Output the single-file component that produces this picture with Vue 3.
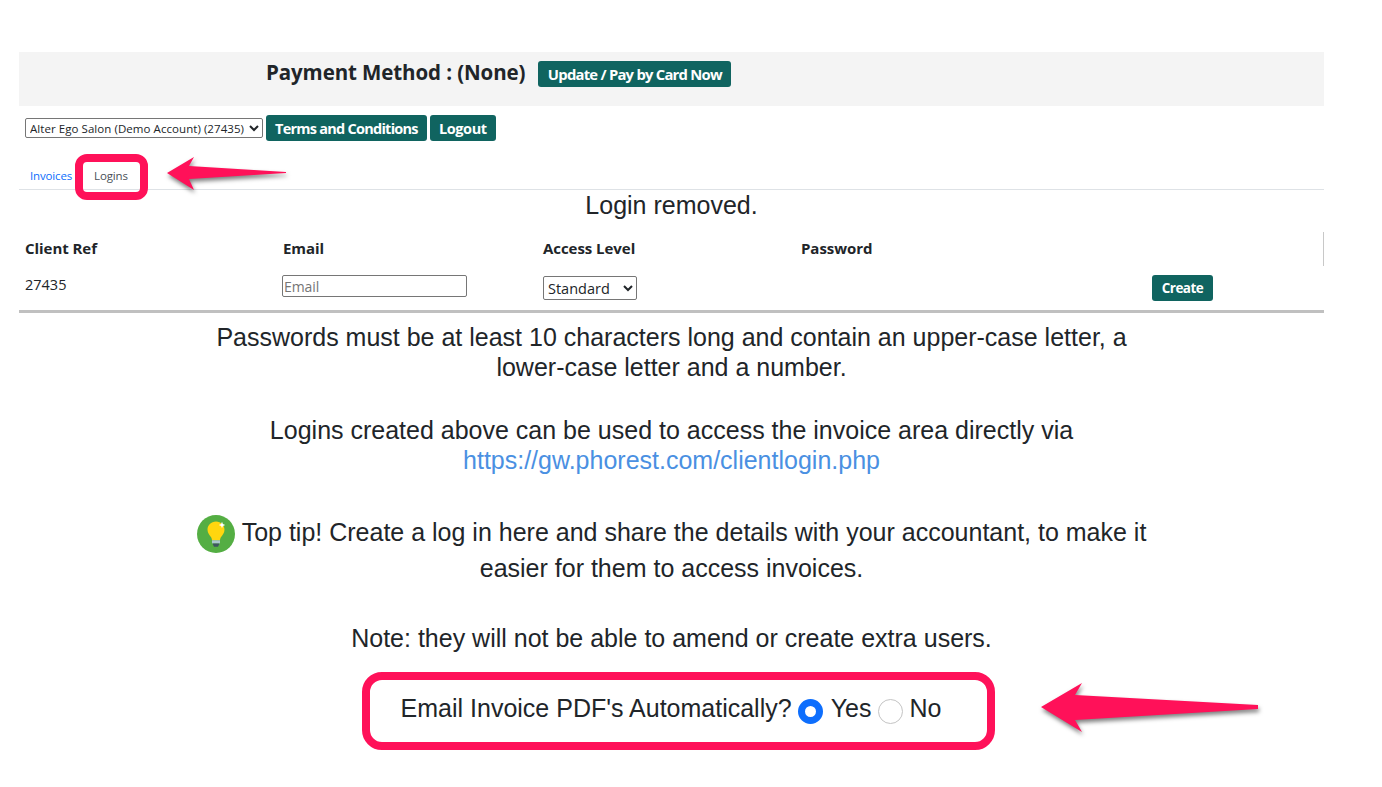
<script setup>
const headers = ['Client Ref', 'Email', 'Access Level', 'Password']
</script>

<template>
  <div class="page">
    <div class="paybar">
      <strong class="paytext">Payment Method : (None)</strong>
      <button class="btn btn-lg btn-pay" type="button">Update / Pay by Card Now</button>
    </div>

    <div class="account">
      <select class="account-select">
        <option>Alter Ego Salon (Demo Account) (27435)</option>
      </select>
      <button class="btn btn-lg" type="button">Terms and Conditions</button>
      <button class="btn btn-lg btn-logout" type="button">Logout</button>
    </div>

    <nav class="tabs">
      <a class="tab tab-link">Invoices</a>
      <a class="tab tab-active">Logins</a>
    </nav>

    <div class="removed">Login removed.</div>

    <div class="grid">
      <div v-for="h in headers" :key="h" class="th">{{ h }}</div>
      <div class="th th-end"></div>
      <div class="td ref">27435</div>
      <div class="td"><input class="email" type="text" placeholder="Email" /></div>
      <div class="td"><select class="level"><option>Standard</option></select></div>
      <div class="td"></div>
      <div class="td"><button class="btn btn-create" type="button">Create</button></div>
    </div>

    <div class="copy">
      <p class="para first">Passwords must be at least 10 characters long and contain an upper-case letter, a<br />lower-case letter and a number.</p>
      <p class="para second">Logins created above can be used to access the invoice area directly via<br /><a class="link">https://gw.phorest.com/clientlogin.php</a></p>
      <div class="tip">
        <svg class="bulb" viewBox="0 0 38 38" width="38" height="38" aria-hidden="true">
          <circle cx="19" cy="19" r="19" fill="#54ae43" />
          <path d="M19 6.500c-5 0-8.500 3.700-8.500 8.200 0 3.400 2 5.100 3.400 7.300.8 1.200 1 2.200 1.100 3.300h8c.1-1.100.3-2.100 1.100-3.300 1.400-2.200 3.400-3.900 3.400-7.300 0-4.500-3.500-8.200-8.500-8.200z" fill="#ffd60f" />
          <rect x="15" y="25.300" width="8" height="3.200" fill="#a9c7cc" />
          <path d="M15.500 28.500h7l-1.500 3.200h-4z" fill="#3d5560" />
          <path d="M25 6.800l.9 2.300 2.300.9-2.300.9-.9 2.300-.9-2.300-2.300-.9 2.300-.9z" fill="#fff" />
        </svg>
        <span>Top tip! Create a log in here and share the details with your accountant, to make it</span>
      </div>
      <p class="para tip-end">easier for them to access invoices.</p>
      <p class="para note">Note: they will not be able to amend or create extra users.</p>
      <div class="auto">
        <span>Email Invoice PDF's Automatically?</span>
        <input class="radio" type="radio" name="auto" checked />
        <span>Yes</span>
        <input class="radio radio-second" type="radio" name="auto" />
        <span>No</span>
      </div>
    </div>

    <div class="mark mark-tab"></div>
    <div class="mark mark-auto"></div>

    <svg class="arrow arrow-tab" viewBox="0 0 130 42" width="130" height="42" aria-hidden="true">
      <path d="M2 21L29 5l-5 9 97 6v1l-97 6 5 11z" fill="#ff1159" />
    </svg>
    <svg class="arrow arrow-auto" viewBox="0 0 225 56" width="225" height="56" aria-hidden="true">
      <path d="M3 26L44 2l-7 12 183 10v4L37 39l7 12z" fill="#ff1159" />
    </svg>
  </div>
</template>

<style scoped>
.page {
  position: relative;
  width: 1305px;
  height: 787px;
  margin-left: 19px;
  padding-top: 52px;
  box-sizing: border-box;
  font-family: "Open Sans", "Noto Sans", sans-serif;
  color: #212529;
}
.paybar {
  display: flex;
  align-items: flex-start;
  gap: 13px;
  height: 54px;
  padding: 9px 0 0 247px;
  box-sizing: border-box;
  background: #f4f4f4;
}
.paytext {
  margin-top: -1px;
  font-size: 20.500px;
  line-height: 24px;
  font-weight: 700;
  letter-spacing: -0.1px;
}
.btn {
  border: 0;
  border-radius: 3px;
  background: #106460;
  color: #fff;
  font-family: "Open Sans", sans-serif;
  font-weight: 700;
  padding: 0;
}
.btn-lg {
  height: 26px;
  padding: 0 9px;
  font-size: 14.500px;
  letter-spacing: -0.75px;
}
.btn-pay {
  width: 193px;
  padding: 0;
  font-size: 14.800px;
}
.btn-logout {
  width: 66px;
  padding: 0;
  letter-spacing: -0.4px;
}
.account {
  display: flex;
  align-items: center;
  gap: 3px;
  height: 26px;
  margin-top: 9px;
  padding-left: 6px;
}
.account-select {
  width: 238px;
  height: 20px;
  padding: 0;
  border: 1px solid #767676;
  border-radius: 2px;
  background: #fff;
  font-family: "Open Sans", sans-serif;
  font-size: 11.500px;
  letter-spacing: 0.06px;
  color: #212529;
}
.tabs {
  display: flex;
  height: 49px;
  padding: 26px 0 0 11px;
  box-sizing: border-box;
  border-bottom: 1px solid #dee2e6;
  font-size: 11.500px;
  line-height: 18px;
  letter-spacing: -0.15px;
}
.tab-link {
  color: #0d6efd;
}
.tab-active {
  margin-left: 22px;
  color: #495057;
}
.removed {
  height: 31px;
  font-family: "Liberation Sans", Arial, sans-serif;
  font-size: 25px;
  line-height: 30px;
  text-align: center;
}
.grid {
  display: grid;
  grid-template-columns: 258px 260px 258px 357px 172px;
  grid-template-rows: 34px 44px;
  padding-top: 11px;
  border-bottom: 3px solid #c0c0c0;
  font-size: 14.500px;
}
.th {
  padding: 6px 0 0 6px;
  font-size: 15px;
  font-weight: 700;
  line-height: 20px;
  letter-spacing: -0.05px;
}
.th-end {
  border-right: 1px solid #c8c8c8;
}
.ref {
  padding: 9px 0 0 6px;
  line-height: 20px;
}
.email {
  display: block;
  width: 185px;
  height: 22px;
  margin: 9px 0 0 5px;
  padding: 0 1px;
  box-sizing: border-box;
  border: 1px solid #767676;
  border-radius: 2px;
  font-family: "Open Sans", sans-serif;
  font-size: 14px;
  letter-spacing: -0.1px;
}
.email::placeholder {
  color: #757575;
  opacity: 1;
}
.level {
  display: block;
  width: 94px;
  height: 24px;
  margin: 10px 0 0 6px;
  padding: 0;
  border: 1px solid #767676;
  border-radius: 2px;
  background: #fff;
  font-family: "Open Sans", sans-serif;
  font-size: 14.500px;
  color: #212529;
}
.btn-create {
  display: block;
  width: 61px;
  height: 26px;
  margin: 9px 0 0;
  font-size: 13.500px;
  letter-spacing: -0.55px;
}
.copy {
  font-family: "Liberation Sans", Arial, sans-serif;
  font-size: 25px;
  line-height: 30px;
  text-align: center;
}
.para {
  margin: 0;
}
.first {
  margin-top: 9px;
}
.second {
  margin-top: 33px;
}
.link {
  color: #4a90e2;
}
.tip {
  display: flex;
  justify-content: center;
  align-items: center;
  gap: 7px;
  height: 38px;
  margin-top: 40px;
}
.tip span {
  position: relative;
  top: -2px;
}
.bulb {
  flex: none;
}
.note {
  margin-top: 40px;
}
.auto {
  display: flex;
  justify-content: center;
  align-items: center;
  height: 30px;
  margin-top: 40px;
  padding-right: 1px;
}
.radio {
  appearance: none;
  flex: none;
  width: 25px;
  height: 25px;
  margin: 6px 8px 0 6px;
  border: 1px solid #c4c4c4;
  border-radius: 50%;
  background: #fff;
}
.radio:checked {
  border: 7px solid #0d6efd;
}
.radio-second {
  margin-left: 7px;
  margin-right: 6px;
}
.mark {
  position: absolute;
  box-sizing: border-box;
  border: 8px solid #ff1159;
}
.mark-tab {
  left: 56px;
  top: 154px;
  width: 73px;
  height: 46px;
  border-radius: 12px;
}
.mark-auto {
  left: 343px;
  top: 672px;
  width: 633px;
  height: 78px;
  border-radius: 20px;
}
.arrow {
  position: absolute;
  overflow: visible;
  filter: drop-shadow(1px 3px 2px rgba(0, 0, 0, 0.5));
}
.arrow-tab {
  left: 146px;
  top: 152px;
}
.arrow-auto {
  left: 1019px;
  top: 681px;
}
</style>
